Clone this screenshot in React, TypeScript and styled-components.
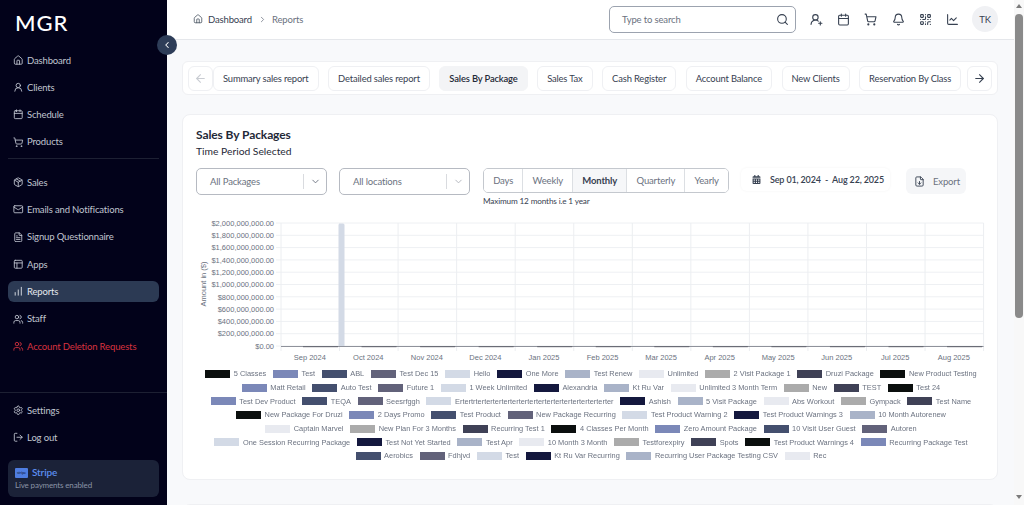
import { ReactNode } from "react";
import styled, { createGlobalStyle } from "styled-components";
import {
  ArrowLeft,
  ArrowRight,
  Bell,
  Calendar,
  ChartNoAxesColumnIncreasing,
  ChevronDown,
  ChevronLeft,
  ChevronRight,
  FileDown,
  FileText,
  Home,
  LineChart,
  LogOut,
  Mail,
  Package,
  PanelsTopLeft,
  QrCode,
  Search,
  Settings,
  ShoppingCart,
  UserRound,
  UserRoundPlus,
  Users,
} from "lucide-react";
import { FaCalendarAlt } from "react-icons/fa";

const GlobalStyle = createGlobalStyle`
  html, body {
    margin: 0;
    height: 100%;
    overflow: hidden;
    font-family: Lato, "Noto Sans", sans-serif;
    letter-spacing: -0.15px;
  }
  * {
    box-sizing: border-box;
  }
`;

const LEGEND_COLORS = [
  "#0b0f0e",
  "#7b88b8",
  "#444f6e",
  "#62627a",
  "#d3dae6",
  "#14183e",
  "#a9b3c8",
  "#e8eaf0",
  "#ababab",
  "#3f4156",
];

const LEGEND_ROWS = [
  ["5 Classes", "Test", "ABL", "Test Dec 15", "Hello", "One More", "Test Renew", "Unlimited", "2 Visit Package 1", "Druzi Package", "New Product Testing"],
  ["Matt Retail", "Auto Test", "Future 1", "1 Week Unlimited", "Alexandria", "Kt Ru Var", "Unlimited 3 Month Term", "New", "TEST", "Test 24"],
  ["Test Dev Product", "TEQA", "Seesrfggh", "Ertertrterterterterterterterterterterterterterterterter", "Ashish", "5 Visit Package", "Abs Workout", "Gympack", "Test Name"],
  ["New Package For Druzi", "2 Days Promo", "Test Product", "New Package Recurring", "Test Product Warning 2", "Test Product Warnings 3", "10 Month Autorenew"],
  ["Captain Marvel", "New Plan For 3 Months", "Recurring Test 1", "4 Classes Per Month", "Zero Amount Package", "10 Visit User Guest", "Autoren"],
  ["One Session Recurring Package", "Test Not Yet Started", "Test Apr", "10 Month 3 Month", "Testforexpiry", "Spots", "Test Product Warnings 4", "Recurring Package Test"],
  ["Aerobics", "Fdhjvd", "Test", "Kt Ru Var Recurring", "Recurring User Package Testing CSV", "Rec"],
];

const MONTHS = ["Sep 2024", "Oct 2024", "Nov 2024", "Dec 2024", "Jan 2025", "Feb 2025", "Mar 2025", "Apr 2025", "May 2025", "Jun 2025", "Jul 2025", "Aug 2025"];
const Y_TICKS = ["$2,000,000,000.00", "$1,800,000,000.00", "$1,600,000,000.00", "$1,400,000,000.00", "$1,200,000,000.00", "$1,000,000,000.00", "$800,000,000.00", "$600,000,000.00", "$400,000,000.00", "$200,000,000.00", "$0.00"];
const TABS = ["Summary sales report", "Detailed sales report", "Sales By Package", "Sales Tax", "Cash Register", "Account Balance", "New Clients", "Reservation By Class"];
const PERIODS = ["Days", "Weekly", "Monthly", "Quarterly", "Yearly"];

function NavLink({ icon, label, active, danger }: { icon: ReactNode; label: string; active?: boolean; danger?: boolean }) {
  return (
    <NavItem $active={active} $danger={danger}>
      {icon}
      <span>{label}</span>
    </NavItem>
  );
}

function SalesChart() {
  const plotLeft = 85;
  const plotTop = 8;
  const stepX = 58.55;
  const stepY = 12.3;
  const plotBottom = plotTop + stepY * 10;
  const plotRight = plotLeft + stepX * 12;

  return (
    <ChartSvg width={790} height={150} viewBox="0 0 790 150">
      {Y_TICKS.map((tick, i) => (
        <g key={tick}>
          <line x1={plotLeft - 5} x2={plotRight} y1={plotTop + i * stepY} y2={plotTop + i * stepY} stroke="#eef0f3" />
          <text x={78} y={plotTop + i * stepY + 2.7} textAnchor="end" fontSize="7.5" fill="#6b7280">
            {tick}
          </text>
        </g>
      ))}
      {Array.from({ length: 13 }).map((_, i) => (
        <line key={i} x1={plotLeft + i * stepX} x2={plotLeft + i * stepX} y1={plotTop} y2={plotBottom + 5} stroke="#eceef1" />
      ))}
      <path d="M142.5 131V10a1.5 1.5 0 0 1 1.5-1.5h3a1.5 1.5 0 0 1 1.5 1.5V131z" fill="#d3dae6" />
      <line x1={plotLeft} x2={plotRight} y1={plotBottom + 0.5} y2={plotBottom + 0.5} stroke="#8f929b" />
      {MONTHS.map((month, i) => (
        <g key={month}>
          <rect x={plotLeft + i * stepX + 22} y={plotBottom} width={35} height={1.2} fill="#6a6c76" />
          <text x={plotLeft + stepX / 2 + i * stepX - 0.5} y={145} textAnchor="middle" fontSize="7.5" fill="#6b7280">
            {month}
          </text>
        </g>
      ))}
      <text transform="translate(10 69) rotate(-90)" textAnchor="middle" fontSize="7.5" fill="#6b7280">
        Amount in ($)
      </text>
    </ChartSvg>
  );
}

function Legend() {
  let colorIndex = 0;
  return (
    <LegendBox>
      {LEGEND_ROWS.map((row, r) => (
        <LegendRow key={r}>
          {row.map((label) => {
            const color = LEGEND_COLORS[colorIndex % LEGEND_COLORS.length];
            colorIndex += 1;
            return (
              <LegendEntry key={label}>
                <Swatch $color={color} />
                {label}
              </LegendEntry>
            );
          })}
        </LegendRow>
      ))}
    </LegendBox>
  );
}

export default function App() {
  return (
    <Shell>
      <GlobalStyle />
      <Sidebar>
        <Logo>MGR</Logo>
        <CollapseButton>
          <ChevronLeft size={10} strokeWidth={2.5} />
        </CollapseButton>
        <NavGroup>
          <NavLink icon={<Home />} label="Dashboard" />
          <NavLink icon={<UserRound />} label="Clients" />
          <NavLink icon={<Calendar />} label="Schedule" />
          <NavLink icon={<ShoppingCart />} label="Products" />
        </NavGroup>
        <NavDivider />
        <NavGroup>
          <NavLink icon={<Package />} label="Sales" />
          <NavLink icon={<Mail />} label="Emails and Notifications" />
          <NavLink icon={<FileText />} label="Signup Questionnaire" />
          <NavLink icon={<PanelsTopLeft />} label="Apps" />
          <NavLink icon={<ChartNoAxesColumnIncreasing />} label="Reports" active />
          <NavLink icon={<Users />} label="Staff" />
          <NavLink icon={<Users />} label="Account Deletion Requests" danger />
        </NavGroup>
        <SidebarFooter>
          <NavGroup>
            <NavLink icon={<Settings />} label="Settings" />
            <NavLink icon={<LogOut />} label="Log out" />
          </NavGroup>
          <StripeCard>
            <StripeTitle>
              <StripeLogo>stripe</StripeLogo>
              Stripe
            </StripeTitle>
            <StripeNote>Live payments enabled</StripeNote>
          </StripeCard>
        </SidebarFooter>
      </Sidebar>

      <Main>
        <Header>
          <Breadcrumb>
            <Home size={10} color="#4b5563" />
            <Crumb>Dashboard</Crumb>
            <ChevronRight size={9} color="#6b7280" />
            <CrumbMuted>Reports</CrumbMuted>
          </Breadcrumb>
          <SearchBox>
            Type to search
            <Search size={13} color="#374151" />
          </SearchBox>
          <HeaderIcons>
            <UserRoundPlus />
            <Calendar />
            <ShoppingCart />
            <Bell />
            <QrCode />
            <LineChart />
          </HeaderIcons>
          <Avatar>TK</Avatar>
        </Header>

        <Content>
          <TabBar>
            <PagerButton $muted>
              <ArrowLeft size={13} />
            </PagerButton>
            <TabScroller>
              {TABS.map((tab) => (
                <Tab key={tab} $active={tab === "Sales By Package"}>
                  {tab}
                </Tab>
              ))}
              <TabSliver />
            </TabScroller>
            <PagerButton>
              <ArrowRight size={13} />
            </PagerButton>
          </TabBar>

          <Card>
            <Title>Sales By Packages</Title>
            <Subtitle>Time Period Selected</Subtitle>
            <FilterRow>
              <SelectBox>
                All Packages
                <SelectArrow>
                  <ChevronDown size={11} color="#6b7280" />
                </SelectArrow>
              </SelectBox>
              <SelectBox>
                All locations
                <SelectArrow>
                  <ChevronDown size={11} color="#b0b4bb" />
                </SelectArrow>
              </SelectBox>
              <PeriodColumn>
                <PeriodGroup>
                  {PERIODS.map((period) => (
                    <PeriodButton key={period} $active={period === "Monthly"}>
                      {period}
                    </PeriodButton>
                  ))}
                </PeriodGroup>
                <PeriodNote>Maximum 12 months i.e 1 year</PeriodNote>
              </PeriodColumn>
              <DateRange>
                <FaCalendarAlt size={9} color="#374151" />
                <span>Sep 01, 2024&nbsp; - &nbsp;Aug 22, 2025</span>
              </DateRange>
              <ExportButton>
                <FileDown size={11} color="#374151" />
                Export
              </ExportButton>
            </FilterRow>
            <SalesChart />
            <Legend />
          </Card>
          <NextCard />
        </Content>
      </Main>

      <Scrollbar>
        <ScrollArrow $up />
        <ScrollThumb />
        <ScrollArrow />
      </Scrollbar>
    </Shell>
  );
}

const Shell = styled.div`
  display: flex;
  height: 505px;
  width: 1024px;
  overflow: hidden;
  background: #f8f9fb;
`;

const Sidebar = styled.aside`
  position: relative;
  display: flex;
  flex-direction: column;
  flex: 0 0 167px;
  background: #02021a;
  padding: 0 8px 8px;
`;

const Logo = styled.div`
  height: 49.5px;
  padding: 8px 7px 0;
  color: #ffffff;
  font-size: 22px;
  font-weight: 500;
  letter-spacing: 1px;
  line-height: 30px;
`;

const CollapseButton = styled.div`
  position: absolute;
  top: 35px;
  right: -10px;
  display: flex;
  align-items: center;
  justify-content: center;
  width: 20px;
  height: 20px;
  border-radius: 50%;
  background: #2e3d58;
  color: #ffffff;
`;

const NavGroup = styled.nav`
  display: flex;
  flex-direction: column;
  gap: 6.3px;
`;

const NavItem = styled.div<{ $active?: boolean; $danger?: boolean }>`
  display: flex;
  align-items: center;
  gap: 3.5px;
  height: 21px;
  padding-left: 5px;
  border-radius: 6px;
  background: ${(p) => (p.$active ? "#2c3a54" : "transparent")};
  color: ${(p) => (p.$danger ? "#d8323f" : p.$active ? "#e5e8ee" : "#c0c5d0")};
  font-size: 9.5px;

  svg {
    flex: none;
    width: 10.5px;
    height: 10.5px;
  }
`;

const NavDivider = styled.div`
  height: 1px;
  margin: 6px 0 12.5px;
  background: #1d2033;
`;

const SidebarFooter = styled.div`
  margin: auto -8px 0;
  padding: 7px 8px 0;
  border-top: 1px solid #1d2033;
`;

const StripeCard = styled.div`
  margin-top: 12px;
  padding: 6px 7px;
  height: 37px;
  border-radius: 6px;
  background: #1b2238;
`;

const StripeTitle = styled.div`
  display: flex;
  align-items: center;
  gap: 4px;
  color: #5b8def;
  font-size: 10px;
  font-weight: 600;
  line-height: 13px;
`;

const StripeLogo = styled.span`
  width: 13px;
  height: 10px;
  border-radius: 1px;
  background: #4f7de0;
  color: #0f1b3d;
  font-size: 4px;
  font-weight: 400;
  line-height: 10px;
  text-align: center;
`;

const StripeNote = styled.div`
  margin-top: 1px;
  color: #8a93a6;
  font-size: 8px;
  line-height: 11px;
`;

const Main = styled.main`
  display: flex;
  flex-direction: column;
  flex: 1;
  min-width: 0;
`;

const Header = styled.header`
  display: flex;
  align-items: center;
  flex: none;
  height: 40px;
  padding: 0 16px 1px 26px;
  background: #ffffff;
  border-bottom: 1px solid #e5e7eb;
`;

const Breadcrumb = styled.div`
  display: flex;
  align-items: center;
  flex: 1;
  font-size: 9.5px;
`;

const Crumb = styled.span`
  margin: 0 6px 0 5px;
  color: #374151;
`;

const CrumbMuted = styled.span`
  margin-left: 5px;
  color: #6b7280;
`;

const SearchBox = styled.div`
  display: flex;
  align-items: center;
  justify-content: space-between;
  width: 187px;
  height: 27px;
  padding: 0 6px 0 12px;
  border: 1px solid #9ca3af;
  border-radius: 5px;
  color: #6b7280;
  font-size: 9.5px;
`;

const HeaderIcons = styled.div`
  display: flex;
  align-items: center;
  gap: 14.2px;
  margin: 0 13px 0 14px;
  color: #374151;

  svg {
    width: 13px;
    height: 13px;
  }
`;

const Avatar = styled.div`
  display: flex;
  align-items: center;
  justify-content: center;
  width: 26px;
  height: 26px;
  border-radius: 50%;
  background: #f0f1f4;
  color: #374151;
  font-size: 9.5px;
`;

const Content = styled.div`
  display: flex;
  flex-direction: column;
  padding: 21px 16px 0 15px;
`;

const TabBar = styled.div`
  display: flex;
  align-items: center;
  height: 34px;
  padding: 0 5px;
  background: #ffffff;
  border: 1px solid #eff0f3;
  border-radius: 6px;
`;

const PagerButton = styled.div<{ $muted?: boolean }>`
  display: flex;
  align-items: center;
  justify-content: center;
  flex: 0 0 25px;
  height: 25px;
  background: #ffffff;
  border: 1px solid #eff0f3;
  border-radius: 6px;
  color: ${(p) => (p.$muted ? "#c9ccd2" : "#374151")};
`;

const TabScroller = styled.div`
  display: flex;
  flex: 1;
  gap: 9.5px;
  overflow: hidden;
`;

const Tab = styled.div<{ $active?: boolean }>`
  flex: none;
  height: 25px;
  padding: 0 9px;
  background: ${(p) => (p.$active ? "#f3f4f6" : "#ffffff")};
  border: 1px solid ${(p) => (p.$active ? "#f3f4f6" : "#eff0f3")};
  border-radius: 6px;
  color: ${(p) => (p.$active ? "#1f2937" : "#374151")};
  font-size: 9.4px;
  font-weight: ${(p) => (p.$active ? 600 : 400)};
  line-height: 23px;
`;

const TabSliver = styled.div`
  flex: 0 0 30px;
  height: 25px;
  background: #ffffff;
  border: 1px solid #eff0f3;
  border-radius: 6px;
`;

const Card = styled.section`
  height: 366px;
  margin-top: 19px;
  padding: 12px 13px;
  background: #ffffff;
  border: 1px solid #eff0f3;
  border-radius: 8px;
`;

const Title = styled.h2`
  margin: 0;
  color: #1f2937;
  font-size: 12px;
  font-weight: 700;
  letter-spacing: -0.1px;
  line-height: 16px;
`;

const Subtitle = styled.div`
  margin-top: 0;
  color: #1f2937;
  font-size: 10.3px;
  letter-spacing: 0;
  line-height: 16px;
`;

const FilterRow = styled.div`
  display: flex;
  align-items: flex-start;
  margin-top: 9px;
`;

const SelectBox = styled.div`
  display: flex;
  align-items: center;
  justify-content: space-between;
  width: 131px;
  height: 27px;
  margin-right: 12px;
  padding: 0 0 1px 13px;
  border: 1px solid #b6bac2;
  border-radius: 5px;
  color: #6b7280;
  font-size: 9.5px;
`;

const SelectArrow = styled.div`
  display: flex;
  align-items: center;
  justify-content: center;
  width: 23px;
  height: 15px;
  border-left: 1px solid #d9dbdf;
`;

const PeriodColumn = styled.div`
  margin-left: 1px;
`;

const PeriodGroup = styled.div`
  display: flex;
  width: 246px;
  height: 25px;
  border: 1px solid #c4c8ce;
  border-radius: 5px;
  overflow: hidden;
`;

const PeriodButton = styled.div<{ $active?: boolean }>`
  flex: auto;
  padding: 0 9px;
  background: ${(p) => (p.$active ? "#f6f7f9" : "#ffffff")};
  color: ${(p) => (p.$active ? "#374151" : "#6b7280")};
  font-size: 9.5px;
  font-weight: ${(p) => (p.$active ? 700 : 400)};
  line-height: 23px;
  text-align: center;

  & + & {
    border-left: 1px solid #dcdfe3;
  }
`;

const PeriodNote = styled.div`
  margin-top: 2px;
  color: #374151;
  font-size: 8.2px;
  line-height: 12px;
`;

const DateRange = styled.div`
  display: flex;
  align-items: center;
  gap: 9px;
  width: 149px;
  height: 23px;
  margin-left: 12px;
  padding-left: 11px;
  border-radius: 6px;
  box-shadow: 0 0 3px rgba(17, 24, 39, 0.05);
  color: #374151;
  font-size: 9px;
  font-weight: 600;
  white-space: nowrap;
`;

const ExportButton = styled.div`
  display: flex;
  align-items: center;
  gap: 8px;
  width: 60px;
  height: 26px;
  margin-left: 16px;
  padding-left: 8px;
  border-radius: 6px;
  background: #f5f6f8;
  color: #6b7280;
  font-size: 9.5px;
`;

const ChartSvg = styled.svg`
  display: block;
  margin-top: 8px;
  font-family: "Liberation Sans", Arial, sans-serif;
  letter-spacing: 0;
`;

const LegendBox = styled.div`
  display: flex;
  flex-direction: column;
  align-items: center;
  width: 790px;
  margin-top: 2px;
  will-change: transform;
`;

const LegendRow = styled.div`
  display: flex;
  gap: 6.7px;
  height: 13.7px;
  align-items: center;
  color: #6b7280;
  font-family: "Liberation Sans", Arial, sans-serif;
  font-size: 7.4px;
  letter-spacing: 0;
  white-space: nowrap;
`;

const LegendEntry = styled.div`
  display: flex;
  align-items: center;
  gap: 3.5px;
`;

const Swatch = styled.span<{ $color: string }>`
  width: 25px;
  height: 8px;
  background: ${(p) => p.$color};
`;

const NextCard = styled.div`
  height: 40px;
  margin-top: 24px;
  background: #ffffff;
  border: 1px solid #eff0f3;
  border-radius: 8px 8px 0 0;
`;

const Scrollbar = styled.div`
  display: flex;
  flex-direction: column;
  align-items: center;
  flex: 0 0 10px;
  background: #f8f8f8;
`;

const ScrollArrow = styled.div<{ $up?: boolean }>`
  flex: none;
  width: 0;
  height: 0;
  margin: ${(p) => (p.$up ? "4px 0 6px" : "auto 0 6px")};
  border-left: 3px solid transparent;
  border-right: 3px solid transparent;
  border-bottom: ${(p) => (p.$up ? "4px solid #7b7b7b" : "0")};
  border-top: ${(p) => (p.$up ? "0" : "4px solid #7b7b7b")};
`;

const ScrollThumb = styled.div`
  width: 8px;
  height: 304px;
  border-radius: 4px;
  background: #8a8a8a;
`;
